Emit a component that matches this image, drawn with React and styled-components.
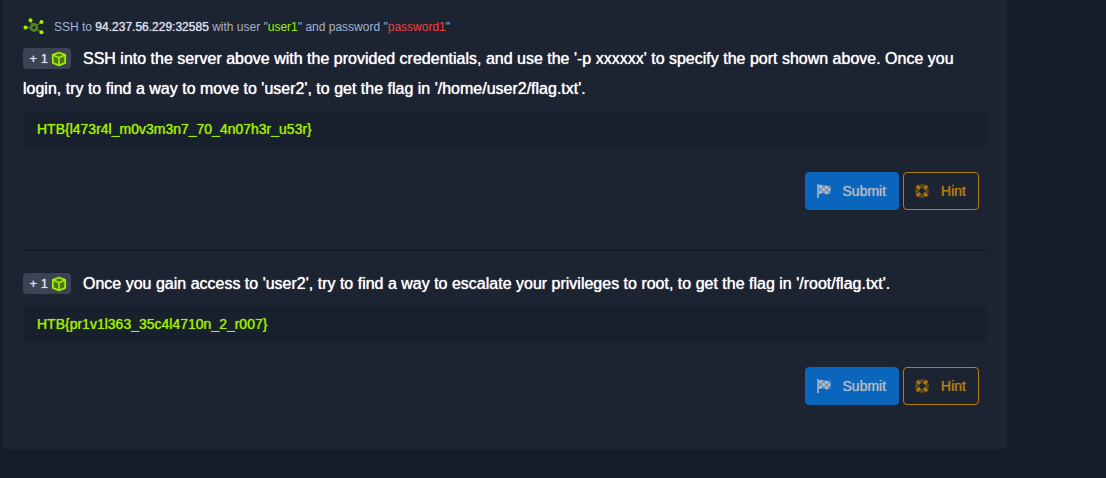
import React from "react";
import styled, { createGlobalStyle } from "styled-components";

const GlobalStyle = createGlobalStyle`
  * { box-sizing: border-box; }
  body {
    margin: 0;
    background: #151e2b;
    color: #ffffff;
    font-family: "Liberation Sans", Arial, sans-serif;
    font-size: 16px;
  }
`;

const Page = styled.main`
  padding: 0 99px 29px 3px;
`;

const Card = styled.section`
  padding: 18px 20px 44px;
  background: #1c2431;
  border-radius: 0 0 4px 4px;
  box-shadow: 0 4px 12px rgba(24, 30, 38, 0.6);
`;

const Connection = styled.p`
  display: flex;
  align-items: center;
  gap: 9px;
  margin: 0 0 8px;
  height: 18px;
  color: #a4b1cd;
  font-size: 12px;
  line-height: 18px;
`;

const Host = styled.span`
  color: #d9dfee;
  text-shadow: 0 0 1px currentColor;
`;

const Username = styled.span`
  color: #9fef00;
`;

const Password = styled.span`
  color: #f43f3f;
`;

const Task = styled.form`
  & + & {
    margin-top: 40px;
    padding-top: 18px;
    border-top: 1px solid #111822;
  }
`;

const Question = styled.label`
  display: block;
  line-height: 30px;
  text-shadow: 0 0 1px currentColor;
`;

const Points = styled.span`
  display: inline-flex;
  align-items: center;
  justify-content: flex-end;
  gap: 3px;
  width: 48px;
  height: 21px;
  margin-right: 12px;
  padding-right: 4px;
  border-radius: 4px;
  background: #3c4453;
  color: #d9dfee;
  font-size: 13px;
  line-height: 21px;
  vertical-align: 1px;
`;

const Answer = styled.input`
  display: block;
  width: 100%;
  height: 36px;
  margin-top: 7px;
  padding: 0 14px;
  border: 0;
  border-radius: 4px;
  outline: 0;
  background: #18202d;
  color: #9fef00;
  font: inherit;
  font-size: 14px;
  text-shadow: 0 0 1px currentColor;
`;

const Actions = styled.div`
  display: flex;
  justify-content: flex-end;
  gap: 4px;
  margin-top: 25px;
  padding-right: 8px;
`;

const Button = styled.button`
  display: flex;
  align-items: center;
  gap: 12px;
  height: 38px;
  padding: 0 12px 0 11px;
  border: 1px solid ${({ $outline }) => ($outline ? "#b57d10" : "#0a66bd")};
  border-radius: 4px;
  background: ${({ $outline }) => ($outline ? "transparent" : "#0a66bd")};
  color: ${({ $outline }) => ($outline ? "#b57d10" : "#b3bac4")};
  font: inherit;
  font-size: 14px;
  text-shadow: 0 0 1px currentColor;
`;

const NetworkIcon = () => (
  <svg width="22" height="18" viewBox="0 0 22 18" aria-hidden="true">
    <g stroke="#55801a" strokeWidth="1.4">
      <path d="M7 9.500H3M9.500 7 7.500 2.500M13.500 7.500 18.500 4M13.500 11.500 18.500 14" />
    </g>
    <circle cx="11" cy="9.500" r="3" fill="none" stroke="#55801a" strokeWidth="2.800" />
    <g fill="#9fef00">
      <circle cx="2.500" cy="9.500" r="2" />
      <circle cx="7.500" cy="2.200" r="2" />
      <circle cx="18.500" cy="4" r="2" />
      <circle cx="18.500" cy="14.200" r="2" />
    </g>
  </svg>
);

const CubeIcon = () => (
  <svg width="16" height="16" viewBox="0 0 16 16" aria-hidden="true">
    <path d="M8 1.500 14.200 3.800V11.800L8 14.500 1.800 11.800V3.800Z" fill="#4e7420" stroke="#9fef00" strokeWidth="1.800" strokeLinejoin="round" />
    <path d="M1.800 4 8 6.700 14.200 4M8 6.700V14.500" fill="none" stroke="#9fef00" strokeWidth="1.600" />
  </svg>
);

const FlagIcon = () => (
  <svg width="14" height="14" viewBox="0 0 14 14" aria-hidden="true">
    <path d="M1 0V14" stroke="#b3bac4" strokeWidth="1.500" />
    <path d="M2 1.500Q5 0 7.500 1.500T13.500 1.300V9.300Q10 11 7.500 9.700T2 10Z" fill="#6e93c0" />
    <path d="M2 1.500 5 .8V3.800L2 4.300ZM8 1.600 11 2V4.800L8 4.400ZM5 3.800 8 4.400V7.200L5 6.800ZM11 4.800 13.500 4V6.800L11 7.500ZM2 7.200 5 6.800V9.300L2 10ZM8 7.200 11 7.500V10.300L8 9.900Z" fill="#b3bac4" />
  </svg>
);

const HintIcon = () => (
  <svg width="14" height="14" viewBox="0 0 14 14" aria-hidden="true">
    <circle cx="7" cy="7" r="5" fill="none" stroke="#5d4821" strokeWidth="4" />
    <path d="M1.800 1.800 5 5M12.200 1.800 9 5M1.800 12.200 5 9M12.200 12.200 9 9" stroke="#b57d10" strokeWidth="2.400" />
  </svg>
);

const tasks = [
  {
    id: "user-flag",
    question:
      "SSH into the server above with the provided credentials, and use the '-p xxxxxx' to specify the port shown above. Once you login, try to find a way to move to 'user2', to get the flag in '/home/user2/flag.txt'.",
    answer: "HTB{l473r4l_m0v3m3n7_70_4n07h3r_u53r}",
  },
  {
    id: "root-flag",
    question:
      "Once you gain access to 'user2', try to find a way to escalate your privileges to root, to get the flag in '/root/flag.txt'.",
    answer: "HTB{pr1v1l363_35c4l4710n_2_r007}",
  },
];

export default function App() {
  return (
    <>
      <GlobalStyle />
      <Page>
        <Card>
          <Connection>
            <NetworkIcon />
            <span>
              SSH to <Host>94.237.56.229:32585</Host> with user "<Username>user1</Username>" and password "
              <Password>password1</Password>"
            </span>
          </Connection>
          {tasks.map((task) => (
            <Task key={task.id} onSubmit={(event) => event.preventDefault()}>
              <Question htmlFor={task.id}>
                <Points>
                  + 1
                  <CubeIcon />
                </Points>
                {task.question}
              </Question>
              <Answer id={task.id} type="text" defaultValue={task.answer} />
              <Actions>
                <Button type="submit">
                  <FlagIcon />
                  Submit
                </Button>
                <Button type="button" $outline>
                  <HintIcon />
                  Hint
                </Button>
              </Actions>
            </Task>
          ))}
        </Card>
      </Page>
    </>
  );
}
